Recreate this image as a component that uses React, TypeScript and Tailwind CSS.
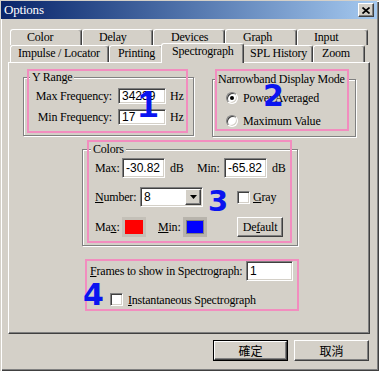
import React from 'react';

const sunken =
  'bg-white border border-t-[#808080] border-l-[#808080] border-r-white border-b-white shadow-[inset_1px_1px_0_#404040,inset_-1px_-1px_0_#d4d0c8]';
const raised =
  'bg-[#d4d0c8] border border-t-white border-l-white border-r-[#404040] border-b-[#404040] shadow-[inset_-1px_-1px_0_#808080]';
const etched = 'border border-[#808080] shadow-[inset_1px_1px_0_#fff,1px_1px_0_#fff]';
const tab =
  'h-full border-t border-l border-r border-t-white border-l-white border-r-[#404040] rounded-t-[3px] shadow-[inset_-1px_0_0_#808080] whitespace-nowrap';
const sans = "font-['Liberation_Sans',sans-serif]";

function Group({
  label,
  labelPos,
  frame,
  children,
}: {
  label: string;
  labelPos: string;
  frame: string;
  children: React.ReactNode;
}) {
  return (
    <div className="relative pt-[7px]">
      <div className={`${etched} ${frame}`}>{children}</div>
      <span className={`absolute top-0 ${labelPos} px-[2px] bg-[#d4d0c8] leading-[14px]`}>{label}</span>
    </div>
  );
}

function Radio({ checked }: { checked?: boolean }) {
  return (
    <span className="w-[12px] h-[12px] rounded-full bg-white border border-t-[#808080] border-l-[#808080] border-r-white border-b-white shadow-[inset_1px_1px_0_#404040,inset_-1px_-1px_0_#d4d0c8] flex items-center justify-center">
      {checked && <span className="w-[4px] h-[4px] rounded-full bg-black" />}
    </span>
  );
}

function Check() {
  return <span className={`${sunken} block w-[13px] h-[13px] shrink-0`} />;
}

function Field({ value, size }: { value: string; size: string }) {
  return (
    <div className={`${sunken} ${size} flex items-center pl-[3px] ${sans} text-[12px] tracking-normal`}>
      {value}
    </div>
  );
}

export default function App() {
  return (
    <div className="relative w-[379px] h-[371px] overflow-hidden bg-[#d4d0c8] font-['Liberation_Serif',serif] text-[12px] leading-[14px] tracking-[-0.2px] text-black shadow-[inset_1px_1px_0_#d4d0c8,inset_2px_2px_0_#fff,inset_-1px_-1px_0_#404040,inset_-2px_-2px_0_#808080]">
      {/* title bar */}
      <div className="ml-[1px] mr-[2px] mt-[1px] h-[18px] flex items-center justify-between pl-[3px] pr-[3px] bg-linear-to-r from-[#0a246a] to-[#a6caf0]">
        <span className="text-white text-[13px]">Options</span>
        <span className={`${raised} w-[16px] h-[14px] flex items-center justify-center`}>
          <svg width="8" height="7" viewBox="0 0 8 7">
            <path d="M0.5 0.5l7 6M7.5 0.5l-7 6" stroke="#000" strokeWidth="1.7" />
          </svg>
        </span>
      </div>

      {/* tab rows */}
      <div className="flex ml-[10px] mt-[10px] h-[16px]">
        <div className={`${tab} w-[72px] pl-[16px]`}>Color</div>
        <div className={`${tab} w-[71px] pl-[16px]`}>Delay</div>
        <div className={`${tab} w-[72px] pl-[17px]`}>Devices</div>
        <div className={`${tab} w-[72px] pl-[17px]`}>Graph</div>
        <div className={`${tab} w-[71px] pl-[16px]`}>Input</div>
      </div>
      <div className="flex items-start ml-[10px] h-[17px]">
        <div className={`${tab} w-[99px] pl-[7px]`}>Impulse / Locator</div>
        <div className={`${tab} w-[54px] pl-[8px]`}>Printing</div>
        <div className={`${tab} relative z-10 -mx-[2px] -mt-[2px] w-[83px] !h-[20px] pl-[10px] bg-[#d4d0c8]`}>
          Spectrograph
        </div>
        <div className={`${tab} w-[71px] pl-[7px]`}>SPL History</div>
        <div className={`${tab} w-[52px] pl-[8px]`}>Zoom</div>
      </div>

      {/* tab page */}
      <div className="ml-[8px] w-[362px] h-[272px] border border-t-white border-l-white border-r-[#404040] border-b-[#404040] shadow-[inset_-1px_-1px_0_#808080]">
        <div className="flex items-start mt-[7px] ml-[14px]">
          <Group label="Y Range" labelPos="left-[7px]" frame="w-[171px] h-[59px]">
            <div className="flex flex-col gap-[5px] pt-[10px]">
              <div className="flex items-center h-[16px]">
                <span className="w-[88px] text-right">Max Frequency:</span>
                <div className="ml-[6px]">
                  <Field value="34239" size="w-[48px] h-[16px]" />
                </div>
                <span className="ml-[4px]">Hz</span>
              </div>
              <div className="flex items-center h-[16px]">
                <span className="w-[88px] text-right">Min Frequency:</span>
                <div className="ml-[6px]">
                  <Field value="17" size="w-[48px] h-[16px]" />
                </div>
                <span className="ml-[4px]">Hz</span>
              </div>
            </div>
          </Group>
          <div className="ml-[18px] mt-[2px]">
            <Group label="Narrowband Display Mode" labelPos="left-[4px]" frame="w-[144px] h-[58px]">
              <div className="flex flex-col gap-[7px] pt-[10px] pl-[13px]">
                <label className="flex items-center h-[16px] gap-[5px]">
                  <Radio checked />
                  <span>Power Averaged</span>
                </label>
                <label className="flex items-center h-[16px] gap-[5px]">
                  <Radio />
                  <span>Maximum Value</span>
                </label>
              </div>
            </Group>
          </div>
        </div>

        <div className="ml-[73px] mt-[5px] w-fit">
          <Group label="Colors" labelPos="left-[9px]" frame="w-[216px] h-[97px]">
            <div className="flex flex-col pt-[8px] pl-[12px]">
              <div className="flex items-center h-[20px]">
                <span className="w-[27px]">Max:</span>
                <Field value="-30.82" size="w-[43px] h-[20px]" />
                <span className="ml-[5px] w-[27px]">dB</span>
                <span className="w-[27px]">Min:</span>
                <Field value="-65.82" size="w-[43px] h-[20px]" />
                <span className="ml-[5px]">dB</span>
              </div>
              <div className="flex items-center h-[20px] mt-[9px]">
                <span className="w-[45px]">
                  <span className="underline">N</span>umber:
                </span>
                <div className={`${sunken} w-[63px] h-[20px] p-[1px] flex items-center justify-between`}>
                  <span className={`pl-[2px] ${sans}`}>8</span>
                  <span className={`${raised} w-[16px] h-[16px] flex items-center justify-center`}>
                    <svg width="7" height="4" viewBox="0 0 7 4">
                      <path d="M0 0h7L3.5 4z" fill="#000" />
                    </svg>
                  </span>
                </div>
                <span className="ml-[34px]">
                  <Check />
                </span>
                <span className="ml-[3px]">
                  <span className="underline">G</span>ray
                </span>
              </div>
              <div className="flex items-center h-[20px] mt-[10px]">
                <span className="w-[27px]">
                  Ma<span className="underline">x</span>:
                </span>
                <span className="w-[24px] h-[20px] border-[3px] border-[#c4c0b8] bg-[#ff0000]" />
                <span className="ml-[12px] w-[25px]">
                  <span className="underline">M</span>in:
                </span>
                <span className="w-[24px] h-[20px] border-[3px] border-[#b8b4ac] shadow-[inset_0_0_0_1px_#808080] bg-[#0000ff]" />
                <span className={`${raised} ml-[30px] w-[46px] h-[20px] flex items-center justify-center`}>
                  De<span className="underline">f</span>ault
                </span>
              </div>
            </div>
          </Group>
        </div>

        <div className="flex items-center h-[20px] mt-[15px] ml-[81px]">
          <span className="w-[156px] whitespace-nowrap">
            <span className="underline">F</span>rames to show in Spectrograph:
          </span>
          <Field value="1" size="w-[47px] h-[20px]" />
        </div>
        <div className="flex items-center h-[13px] mt-[12px] ml-[101px]">
          <Check />
          <span className="ml-[5px]">
            <span className="underline">I</span>nstantaneous Spectrograph
          </span>
        </div>
      </div>

      {/* dialog buttons */}
      <div className="flex justify-end gap-[6px] mt-[6px] pr-[10px] font-['Noto_Sans_CJK_TC',sans-serif] tracking-normal">
        <div className="w-[75px] h-[21px] border border-black">
          <div className={`${raised} w-full h-full flex items-center justify-center`}>確定</div>
        </div>
        <div className={`${raised} w-[75px] h-[21px] flex items-center justify-center`}>取消</div>
      </div>

      {/* annotation overlays */}
      <div className="absolute left-[27px] top-[69px] w-[161px] h-[64px] border-2 border-[#f28dbf]" />
      <div className="absolute left-[215px] top-[69px] w-[134px] h-[62px] border-2 border-[#f28dbf]" />
      <div className="absolute left-[87px] top-[140px] w-[205px] h-[103px] border-2 border-[#f28dbf]" />
      <div className="absolute left-[85px] top-[259px] w-[214px] h-[52px] border-2 border-[#f28dbf]" />

      <span className="absolute left-[138px] top-[87px] text-[36px] leading-none font-bold tracking-normal text-[#0a14f0] font-['Liberation_Sans',sans-serif]">
        1
      </span>
      <span className="absolute left-[263px] top-[81px] text-[30px] leading-none font-bold tracking-normal text-[#0a14f0] font-['DejaVu_Sans',sans-serif]">
        2
      </span>
      <span className="absolute left-[208px] top-[187px] text-[29px] leading-none font-bold tracking-normal text-[#0a14f0] font-['DejaVu_Sans',sans-serif]">
        3
      </span>
      <span className="absolute left-[83px] top-[280px] text-[30px] leading-none font-bold tracking-normal text-[#0a14f0] font-['DejaVu_Sans',sans-serif]">
        4
      </span>
    </div>
  );
}
